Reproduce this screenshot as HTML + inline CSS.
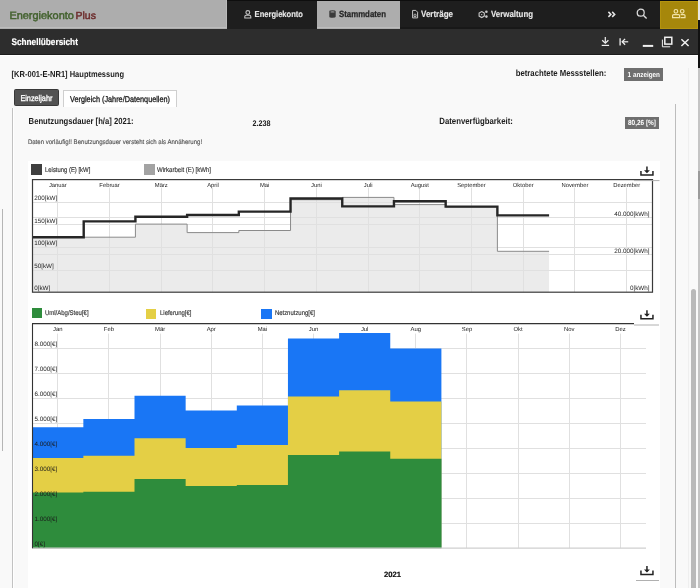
<!DOCTYPE html>
<html><head><meta charset="utf-8"><style>
*{margin:0;padding:0;box-sizing:border-box}
html,body{width:700px;height:588px;overflow:hidden;background:#f9f9f9;font-family:"Liberation Sans",sans-serif}
.a{position:absolute}
.t{position:absolute;white-space:nowrap;line-height:1;transform-origin:0 0;-webkit-font-smoothing:antialiased;will-change:transform}
svg text{font-family:"Liberation Sans",sans-serif;text-rendering:geometricPrecision}
</style></head><body>
<div class="a" style="left:0;top:0;width:700px;height:29.2px;background:#adadad"></div>
<div class="a" style="left:0;top:27.2px;width:227px;height:1px;background:#bcbcbc"></div>
<div class="a" style="left:316.6px;top:27.2px;width:83.4px;height:1px;background:#bcbcbc"></div>
<div class="a" style="left:225.6px;top:0;width:1px;height:28px;background:#bababa"></div>
<div class="a" style="left:227px;top:0;width:89.6px;height:29.2px;background:#1e1e1e"></div>
<div class="a" style="left:400px;top:0;width:260px;height:29.2px;background:#1e1e1e"></div>
<div class="a" style="left:227px;top:0;width:473px;height:1px;background:#0e0e0e"></div>
<div class="a" style="left:400px;top:27.4px;width:260px;height:1.2px;background:#181818"></div>
<div class="a" style="left:660px;top:1px;width:38px;height:28.2px;background:#a6870b;box-shadow:inset 0 0 0 1px #b4930f"></div>
<div class="a" style="left:698px;top:0;width:2px;height:68px;background:#111"></div>
<div class="a" style="left:698px;top:0;width:2px;height:19.5px;background:#e8e8e8"></div>
<div class="a" style="left:0;top:29.2px;width:698px;height:25.4px;background:#2d2d2d;border-bottom:1px solid #1c1c1c"></div>
<div class="a" style="left:0;top:54.6px;width:698px;height:1.5px;background:#ffffff"></div>
<div class="a" style="left:28px;top:160.5px;width:632px;height:428px;background:#fff"></div>
<div class="a" style="left:13.5px;top:89.1px;width:45.9px;height:17px;background:#525252;border:1px solid #383838;border-radius:1.5px"></div>
<div class="a" style="left:63.2px;top:90.3px;width:113.8px;height:17px;background:#fff;border:1px solid #cfcfcf;border-bottom:none"></div>
<div class="a" style="left:11.6px;top:107.5px;width:1.1px;height:481px;background:#c2c2c2"></div>
<div class="a" style="left:12.7px;top:107.5px;width:1.2px;height:481px;background:#ffffff"></div>
<div class="a" style="left:675px;top:104px;width:1.2px;height:484px;background:#bdbdbd"></div>
<div class="a" style="left:688px;top:68px;width:1px;height:520px;background:#efefef"></div>
<div class="a" style="left:690.6px;top:289px;width:5.9px;height:299px;background:#b9b9b9;border-radius:3px 3px 0 0"></div>
<div class="a" style="left:698px;top:68px;width:2px;height:520px;background:#c4c4c4"></div>
<div class="a" style="left:698px;top:171px;width:2px;height:28px;background:#9a9a9a"></div>
<div class="a" style="left:1.5px;top:209px;width:1.9px;height:242px;background:#b5b5b5"></div>
<div class="a" style="left:624px;top:68.3px;width:39px;height:12.6px;background:#6f6f6f"></div>
<div class="a" style="left:625.2px;top:116.5px;width:33.8px;height:12px;background:#6f6f6f"></div>
<div class="a" style="left:31.4px;top:164.3px;width:10.7px;height:10.3px;background:#3f3f3f"></div>
<div class="a" style="left:143.9px;top:164.3px;width:10.7px;height:10.3px;background:#a3a3a3"></div>
<div class="a" style="left:31.5px;top:308.2px;width:10.5px;height:10.3px;background:#2e8c3c"></div>
<div class="a" style="left:145.7px;top:308.6px;width:10.6px;height:10px;background:#e4cf45"></div>
<div class="a" style="left:261.4px;top:308.6px;width:10.6px;height:10px;background:#1976f5"></div>
<svg class="a" style="left:0;top:0;will-change:transform" width="700" height="588" viewBox="0 0 700 588">
<rect x="32.0" y="179.6" width="620.5" height="112.4" fill="#fff"/><polygon points="32.0,292.0 32.00,237.20 83.71,237.20 83.71,237.20 135.42,237.20 135.42,224.10 187.12,224.10 187.12,232.60 238.83,232.60 238.83,230.50 290.54,230.50 290.54,199.70 342.25,199.70 342.25,197.40 393.96,197.40 393.96,204.60 445.67,204.60 445.67,207.00 497.38,207.00 497.38,251.30 549.08,251.30 549.08,292.0" fill="#ebebeb"/><line x1="32.0" x2="652.5" y1="202.5" y2="202.5" stroke="#e0e0e0" stroke-width="1"/><line x1="32.0" x2="652.5" y1="224.5" y2="224.5" stroke="#e0e0e0" stroke-width="1"/><line x1="32.0" x2="652.5" y1="247.5" y2="247.5" stroke="#e0e0e0" stroke-width="1"/><line x1="32.0" x2="652.5" y1="270.5" y2="270.5" stroke="#e0e0e0" stroke-width="1"/><line x1="32.0" x2="652.5" y1="217.5" y2="217.5" stroke="#e0e0e0" stroke-width="1"/><line x1="32.0" x2="652.5" y1="254.5" y2="254.5" stroke="#e0e0e0" stroke-width="1"/><line x1="57.50" x2="57.50" y1="187.6" y2="292.0" stroke="#e0e0e0" stroke-width="1"/><line x1="109.50" x2="109.50" y1="187.6" y2="292.0" stroke="#e0e0e0" stroke-width="1"/><line x1="161.50" x2="161.50" y1="187.6" y2="292.0" stroke="#e0e0e0" stroke-width="1"/><line x1="212.50" x2="212.50" y1="187.6" y2="292.0" stroke="#e0e0e0" stroke-width="1"/><line x1="264.50" x2="264.50" y1="187.6" y2="292.0" stroke="#e0e0e0" stroke-width="1"/><line x1="316.50" x2="316.50" y1="187.6" y2="292.0" stroke="#e0e0e0" stroke-width="1"/><line x1="368.50" x2="368.50" y1="187.6" y2="292.0" stroke="#e0e0e0" stroke-width="1"/><line x1="419.50" x2="419.50" y1="187.6" y2="292.0" stroke="#e0e0e0" stroke-width="1"/><line x1="471.50" x2="471.50" y1="187.6" y2="292.0" stroke="#e0e0e0" stroke-width="1"/><line x1="523.50" x2="523.50" y1="187.6" y2="292.0" stroke="#e0e0e0" stroke-width="1"/><line x1="574.50" x2="574.50" y1="187.6" y2="292.0" stroke="#e0e0e0" stroke-width="1"/><line x1="626.50" x2="626.50" y1="187.6" y2="292.0" stroke="#e0e0e0" stroke-width="1"/><polyline points="32.00,237.20 83.71,237.20 83.71,237.20 135.42,237.20 135.42,224.10 187.12,224.10 187.12,232.60 238.83,232.60 238.83,230.50 290.54,230.50 290.54,199.70 342.25,199.70 342.25,197.40 393.96,197.40 393.96,204.60 445.67,204.60 445.67,207.00 497.38,207.00 497.38,251.30 549.08,251.30" fill="none" stroke="#8a8a8a" stroke-width="1"/><polyline points="32.00,237.20 83.71,237.20 83.71,221.40 135.42,221.40 135.42,216.80 187.12,216.80 187.12,215.00 238.83,215.00 238.83,211.60 290.54,211.60 290.54,198.50 342.25,198.50 342.25,206.40 393.96,206.40 393.96,201.20 445.67,201.20 445.67,206.60 497.38,206.60 497.38,215.40 549.08,215.40" fill="none" stroke="#262626" stroke-width="2.4"/><rect x="32.5" y="179.6" width="620" height="112.6" fill="none" stroke="#3a3a3a" stroke-width="1.2"/><text x="57.85" y="186.6" text-anchor="middle" font-size="5.85" fill="#222">Januar</text><text x="109.56" y="186.6" text-anchor="middle" font-size="5.85" fill="#222">Februar</text><text x="161.27" y="186.6" text-anchor="middle" font-size="5.85" fill="#222">März</text><text x="212.98" y="186.6" text-anchor="middle" font-size="5.85" fill="#222">April</text><text x="264.69" y="186.6" text-anchor="middle" font-size="5.85" fill="#222">Mai</text><text x="316.40" y="186.6" text-anchor="middle" font-size="5.85" fill="#222">Juni</text><text x="368.10" y="186.6" text-anchor="middle" font-size="5.85" fill="#222">Juli</text><text x="419.81" y="186.6" text-anchor="middle" font-size="5.85" fill="#222">August</text><text x="471.52" y="186.6" text-anchor="middle" font-size="5.85" fill="#222">September</text><text x="523.23" y="186.6" text-anchor="middle" font-size="5.85" fill="#222">Oktober</text><text x="574.94" y="186.6" text-anchor="middle" font-size="5.85" fill="#222">November</text><text x="626.65" y="186.6" text-anchor="middle" font-size="5.85" fill="#222">Dezember</text><text x="34.2" y="200" font-size="6.3" fill="#222">200[kW]</text><text x="34.2" y="222.5" font-size="6.3" fill="#222">150[kW]</text><text x="34.2" y="245.3" font-size="6.3" fill="#222">100[kW]</text><text x="34.2" y="268" font-size="6.3" fill="#222">50[kW]</text><text x="34.2" y="290.2" font-size="6.3" fill="#222">0[kW]</text><text x="649.5" y="215.6" text-anchor="end" font-size="6.3" fill="#222">40.000[kWh]</text><text x="649.5" y="252.6" text-anchor="end" font-size="6.3" fill="#222">20.000[kWh]</text><text x="649.5" y="290.2" text-anchor="end" font-size="6.3" fill="#222">0[kWh]</text>
<line x1="32.2" x2="646.0" y1="348.5" y2="348.5" stroke="#e0e0e0" stroke-width="1"/><line x1="32.2" x2="646.0" y1="373.5" y2="373.5" stroke="#e0e0e0" stroke-width="1"/><line x1="32.2" x2="646.0" y1="398.5" y2="398.5" stroke="#e0e0e0" stroke-width="1"/><line x1="32.2" x2="646.0" y1="423.5" y2="423.5" stroke="#e0e0e0" stroke-width="1"/><line x1="32.2" x2="646.0" y1="448.5" y2="448.5" stroke="#e0e0e0" stroke-width="1"/><line x1="32.2" x2="646.0" y1="473.5" y2="473.5" stroke="#e0e0e0" stroke-width="1"/><line x1="32.2" x2="646.0" y1="498.5" y2="498.5" stroke="#e0e0e0" stroke-width="1"/><line x1="32.2" x2="646.0" y1="523.5" y2="523.5" stroke="#e0e0e0" stroke-width="1"/><line x1="57.50" x2="57.50" y1="333.6" y2="548.2" stroke="#e0e0e0" stroke-width="1"/><line x1="108.50" x2="108.50" y1="333.6" y2="548.2" stroke="#e0e0e0" stroke-width="1"/><line x1="160.50" x2="160.50" y1="333.6" y2="548.2" stroke="#e0e0e0" stroke-width="1"/><line x1="211.50" x2="211.50" y1="333.6" y2="548.2" stroke="#e0e0e0" stroke-width="1"/><line x1="262.50" x2="262.50" y1="333.6" y2="548.2" stroke="#e0e0e0" stroke-width="1"/><line x1="313.50" x2="313.50" y1="333.6" y2="548.2" stroke="#e0e0e0" stroke-width="1"/><line x1="364.50" x2="364.50" y1="333.6" y2="548.2" stroke="#e0e0e0" stroke-width="1"/><line x1="415.50" x2="415.50" y1="333.6" y2="548.2" stroke="#e0e0e0" stroke-width="1"/><line x1="466.50" x2="466.50" y1="333.6" y2="548.2" stroke="#e0e0e0" stroke-width="1"/><line x1="518.50" x2="518.50" y1="333.6" y2="548.2" stroke="#e0e0e0" stroke-width="1"/><line x1="569.50" x2="569.50" y1="333.6" y2="548.2" stroke="#e0e0e0" stroke-width="1"/><line x1="620.50" x2="620.50" y1="333.6" y2="548.2" stroke="#e0e0e0" stroke-width="1"/><polygon points="32.2,548.2 32.20,427.20 83.35,427.20 83.35,418.90 134.50,418.90 134.50,395.80 185.65,395.80 185.65,410.40 236.80,410.40 236.80,405.50 287.95,405.50 287.95,338.40 339.10,338.40 339.10,333.00 390.25,333.00 390.25,348.60 441.40,348.60 441.40,548.2" fill="#1976f5"/><polygon points="32.2,548.2 32.20,458.00 83.35,458.00 83.35,455.80 134.50,455.80 134.50,438.30 185.65,438.30 185.65,448.00 236.80,448.00 236.80,445.10 287.95,445.10 287.95,396.40 339.10,396.40 339.10,390.20 390.25,390.20 390.25,401.60 441.40,401.60 441.40,548.2" fill="#e4cf45"/><polygon points="32.2,548.2 32.20,492.50 83.35,492.50 83.35,491.70 134.50,491.70 134.50,479.10 185.65,479.10 185.65,486.10 236.80,486.10 236.80,484.90 287.95,484.90 287.95,455.00 339.10,455.00 339.10,451.40 390.25,451.40 390.25,458.80 441.40,458.80 441.40,548.2" fill="#2e8c3c"/><line x1="32.2" x2="646.0" y1="548.2" y2="548.2" stroke="#cfcfcf" stroke-width="1.2"/><line x1="32.5" x2="32.5" y1="323.6" y2="548.2" stroke="#333" stroke-width="1.1"/><line x1="32" x2="634" y1="323.6" y2="323.6" stroke="#333" stroke-width="1.2"/><text x="57.78" y="330.6" text-anchor="middle" font-size="5.9" fill="#1a1a1a">Jan</text><text x="108.92" y="330.6" text-anchor="middle" font-size="5.9" fill="#1a1a1a">Feb</text><text x="160.07" y="330.6" text-anchor="middle" font-size="5.9" fill="#1a1a1a">Mär</text><text x="211.23" y="330.6" text-anchor="middle" font-size="5.9" fill="#1a1a1a">Apr</text><text x="262.38" y="330.6" text-anchor="middle" font-size="5.9" fill="#1a1a1a">Mai</text><text x="313.52" y="330.6" text-anchor="middle" font-size="5.9" fill="#1a1a1a">Jun</text><text x="364.67" y="330.6" text-anchor="middle" font-size="5.9" fill="#1a1a1a">Jul</text><text x="415.82" y="330.6" text-anchor="middle" font-size="5.9" fill="#1a1a1a">Aug</text><text x="466.97" y="330.6" text-anchor="middle" font-size="5.9" fill="#1a1a1a">Sep</text><text x="518.12" y="330.6" text-anchor="middle" font-size="5.9" fill="#1a1a1a">Okt</text><text x="569.27" y="330.6" text-anchor="middle" font-size="5.9" fill="#1a1a1a">Nov</text><text x="620.43" y="330.6" text-anchor="middle" font-size="5.9" fill="#1a1a1a">Dez</text><text x="34.6" y="546.2" font-size="6.3" fill="#1a1a1a">0[€]</text><text x="34.6" y="521.2" font-size="6.3" fill="#1a1a1a">1.000[€]</text><text x="34.6" y="496.2" font-size="6.3" fill="#1a1a1a">2.000[€]</text><text x="34.6" y="471.2" font-size="6.3" fill="#1a1a1a">3.000[€]</text><text x="34.6" y="446.2" font-size="6.3" fill="#1a1a1a">4.000[€]</text><text x="34.6" y="421.2" font-size="6.3" fill="#1a1a1a">5.000[€]</text><text x="34.6" y="396.2" font-size="6.3" fill="#1a1a1a">6.000[€]</text><text x="34.6" y="371.2" font-size="6.3" fill="#1a1a1a">7.000[€]</text><text x="34.6" y="346.2" font-size="6.3" fill="#1a1a1a">8.000[€]</text>
<line x1="634" x2="659.5" y1="180.6" y2="180.6" stroke="#b0b0b0" stroke-width="1"/>
<line x1="634" x2="659" y1="325" y2="325" stroke="#b0b0b0" stroke-width="1"/>
<line x1="636" x2="659" y1="580.5" y2="580.5" stroke="#b0b0b0" stroke-width="1"/>
<g transform="translate(640.2,166.6)" fill="none" stroke="#222" stroke-width="1.5"><path d="M0.75 4.5 V8.5 H12.75 V4.5"/><path d="M6.75 0 V5.5"/></g><path transform="translate(640.2,166.6)" d="M3.8 3.6 L6.75 6.6 L9.7 3.6 Z" fill="#222"/>
<g transform="translate(640.2,310.2)" fill="none" stroke="#222" stroke-width="1.5"><path d="M0.75 4.5 V8.5 H12.75 V4.5"/><path d="M6.75 0 V5.5"/></g><path transform="translate(640.2,310.2)" d="M3.8 3.6 L6.75 6.6 L9.7 3.6 Z" fill="#222"/>
<g transform="translate(640.2,566)" fill="none" stroke="#222" stroke-width="1.5"><path d="M0.75 4.5 V8.5 H12.75 V4.5"/><path d="M6.75 0 V5.5"/></g><path transform="translate(640.2,566)" d="M3.8 3.6 L6.75 6.6 L9.7 3.6 Z" fill="#222"/>
</svg>

<svg class="a" style="left:0;top:0;will-change:transform" width="700" height="60" viewBox="0 0 700 60">
<g fill="none" stroke="#c4c4c4" stroke-width="1.1">
 <circle cx="247.8" cy="12.5" r="1.9"/>
 <path d="M244.8 18 V16.6 Q244.8 15.2 246.2 15.2 H249.4 Q250.8 15.2 250.8 16.6 V18 Z"/>
</g>
<g>
 <path d="M329.3 11.2 Q329.3 10.2 332.6 10.2 Q335.7 10.2 335.7 11.2 V16.8 Q335.7 17.8 332.6 17.8 Q329.3 17.8 329.3 16.8 Z" fill="#3a3a3a"/>
 <ellipse cx="332.5" cy="11.9" rx="2.2" ry="0.7" fill="#9a9a9a"/>
</g>
<g fill="none" stroke="#c8c8c8" stroke-width="1">
 <path d="M412.6 10.4 H415.8 L417.6 12.2 V17.9 H412.6 Z"/>
 <path d="M414 14.5 Q415 13.6 416 14.5 V16.5 H414 Z" stroke-width="0.8"/>
</g>
<g fill="none" stroke="#c8c8c8" stroke-width="1.1">
 <path d="M481.7 11.6 L484.3 13.1 V16.1 L481.7 17.6 L479.1 16.1 V13.1 Z"/>
 <circle cx="481.7" cy="14.6" r="0.7" fill="#c8c8c8" stroke="none"/>
</g>
<circle cx="486.4" cy="11.8" r="1.3" fill="#c8c8c8"/>
<circle cx="486.4" cy="16.6" r="1.3" fill="#c8c8c8"/>
<g fill="none" stroke="#e6e6e6" stroke-width="1.5" stroke-linejoin="miter">
 <path d="M608.4 11.9 L610.9 14.4 L608.4 16.9"/>
 <path d="M612.2 11.9 L614.7 14.4 L612.2 16.9"/>
</g>
<g fill="none" stroke="#dcdcdc" stroke-width="1.2">
 <circle cx="640.7" cy="12.7" r="3.5"/>
 <path d="M643.3 15.3 L646.6 18.4" stroke-width="1.4"/>
</g>
<g fill="none" stroke="#f1e2a6" stroke-width="1.2">
 <circle cx="675.9" cy="11.3" r="1.8"/>
 <circle cx="682.2" cy="11.3" r="1.8"/>
 <path d="M672.6 17.6 V15.6 Q672.6 14.6 673.6 14.6 H678.6 Q679.6 14.6 679.6 15.6 V17.6 Z"/>
 <path d="M680.6 14.6 H684 Q685 14.6 685 15.6 V17.6 H680.6"/>
</g>
<g fill="none" stroke="#f0f0f0" stroke-width="1.2">
 <path d="M605.3 36.9 V42.6"/>
 <path d="M602.2 40.3 L605.3 43.2 L608.4 40.3" stroke-width="1.3"/>
 <path d="M601.7 45.4 H609.1"/>
 <path d="M620.1 38.2 V45.4" stroke-width="1.3"/>
 <path d="M622.2 41.8 H628.2"/>
 <path d="M625.1 38.9 L622.2 41.8 L625.1 44.7" stroke-width="1.3"/>
 <path d="M642.8 45.9 H653.2" stroke-width="2"/>
 <path d="M662.4 39.6 V46.8 H670.2" stroke-width="1"/>
 <rect x="664.8" y="37.3" width="7" height="6.8" stroke-width="1.5"/>
 <path d="M681.4 39.2 L688.6 46 M688.6 39.2 L681.4 46" stroke-width="1.5"/>
</g>
</svg>

<svg class="a" style="left:0;top:0;will-change:transform" width="700" height="588" viewBox="0 0 700 588"><text x="9.40" y="18.50" font-size="10.725" font-weight="400" fill="#41602c" stroke="#41602c" stroke-width="0.45" textLength="64.50" lengthAdjust="spacingAndGlyphs" style="">Energiekonto</text><text x="75.50" y="18.50" font-size="10.277" font-weight="400" fill="#6d2c2c" stroke="#6d2c2c" stroke-width="0.45" textLength="20.40" lengthAdjust="spacingAndGlyphs" style="">Plus</text><text x="254.60" y="17.20" font-size="8.710" font-weight="700" fill="#e6e6e6" stroke="#e6e6e6" stroke-width="0.15" textLength="48.40" lengthAdjust="spacingAndGlyphs" style="">Energiekonto</text><text x="339.00" y="17.20" font-size="9.006" font-weight="700" fill="#262626" stroke="#262626" stroke-width="0.25" textLength="47.00" lengthAdjust="spacingAndGlyphs" style="">Stammdaten</text><text x="421.00" y="17.20" font-size="9.193" font-weight="700" fill="#e6e6e6" stroke="#e6e6e6" stroke-width="0.15" textLength="32.00" lengthAdjust="spacingAndGlyphs" style="">Verträge</text><text x="491.00" y="17.20" font-size="9.052" font-weight="700" fill="#e6e6e6" stroke="#e6e6e6" stroke-width="0.15" textLength="42.00" lengthAdjust="spacingAndGlyphs" style="">Verwaltung</text><text x="11.40" y="45.00" font-size="9.491" font-weight="700" fill="#ffffff" stroke="#ffffff" stroke-width="0.2" textLength="66.50" lengthAdjust="spacingAndGlyphs" style="">Schnellübersicht</text><text x="11.60" y="76.70" font-size="8.648" font-weight="700" fill="#1c1c1c" textLength="112.40" lengthAdjust="spacingAndGlyphs" style="">[KR-001-E-NR1] Hauptmessung</text><text x="20.40" y="101.00" font-size="8.379" font-weight="400" fill="#ffffff" stroke="#ffffff" stroke-width="0.3" textLength="32.00" lengthAdjust="spacingAndGlyphs" style="">Einzeljahr</text><text x="70.00" y="101.60" font-size="8.375" font-weight="400" fill="#222222" stroke="#222222" stroke-width="0.3" textLength="100.00" lengthAdjust="spacingAndGlyphs" style="">Vergleich (Jahre/Datenquellen)</text><text x="28.60" y="124.40" font-size="8.833" font-weight="700" fill="#1c1c1c" textLength="105.00" lengthAdjust="spacingAndGlyphs" style="">Benutzungsdauer [h/a] 2021:</text><text x="252.40" y="126.00" font-size="8.270" font-weight="700" fill="#222222" textLength="18.00" lengthAdjust="spacingAndGlyphs" style="">2.238</text><text x="439.30" y="124.00" font-size="8.960" font-weight="700" fill="#1c1c1c" textLength="73.60" lengthAdjust="spacingAndGlyphs" style="">Datenverfügbarkeit:</text><text x="515.70" y="76.20" font-size="8.927" font-weight="700" fill="#1c1c1c" textLength="90.60" lengthAdjust="spacingAndGlyphs" style="">betrachtete Messstellen:</text><text x="627.60" y="76.90" font-size="7.286" font-weight="700" fill="#ffffff" textLength="32.40" lengthAdjust="spacingAndGlyphs" style="">1 anzeigen</text><text x="628.00" y="125.00" font-size="7.426" font-weight="700" fill="#ffffff" textLength="28.00" lengthAdjust="spacingAndGlyphs" style="">80,26 [%]</text><text x="27.90" y="143.70" font-size="6.654" font-weight="400" fill="#555555" stroke="#555555" stroke-width="0.15" textLength="174.20" lengthAdjust="spacingAndGlyphs" style="">Daten vorläufig!! Benutzungsdauer versteht sich als Annäherung!</text><text x="45.00" y="171.50" font-size="6.792" font-weight="400" fill="#333333" stroke="#333333" stroke-width="0.15" textLength="45.30" lengthAdjust="spacingAndGlyphs" style="">Leistung (E) [kW]</text><text x="157.00" y="171.50" font-size="6.942" font-weight="400" fill="#333333" stroke="#333333" stroke-width="0.15" textLength="54.00" lengthAdjust="spacingAndGlyphs" style="">Wirkarbeit (E) [kWh]</text><text x="44.90" y="315.20" font-size="6.902" font-weight="400" fill="#333333" stroke="#333333" stroke-width="0.15" textLength="43.70" lengthAdjust="spacingAndGlyphs" style="">Uml/Abg/Steu[€]</text><text x="160.00" y="315.20" font-size="6.835" font-weight="400" fill="#333333" stroke="#333333" stroke-width="0.15" textLength="31.40" lengthAdjust="spacingAndGlyphs" style="">Lieferung[€]</text><text x="274.90" y="315.20" font-size="6.839" font-weight="400" fill="#333333" stroke="#333333" stroke-width="0.15" textLength="40.00" lengthAdjust="spacingAndGlyphs" style="">Netznutzung[€]</text><text x="384.00" y="577.00" font-size="7.640" font-weight="700" fill="#111111" stroke="#111111" stroke-width="0.2" textLength="17.00" lengthAdjust="spacingAndGlyphs" style="">2021</text></svg>
</body></html>
